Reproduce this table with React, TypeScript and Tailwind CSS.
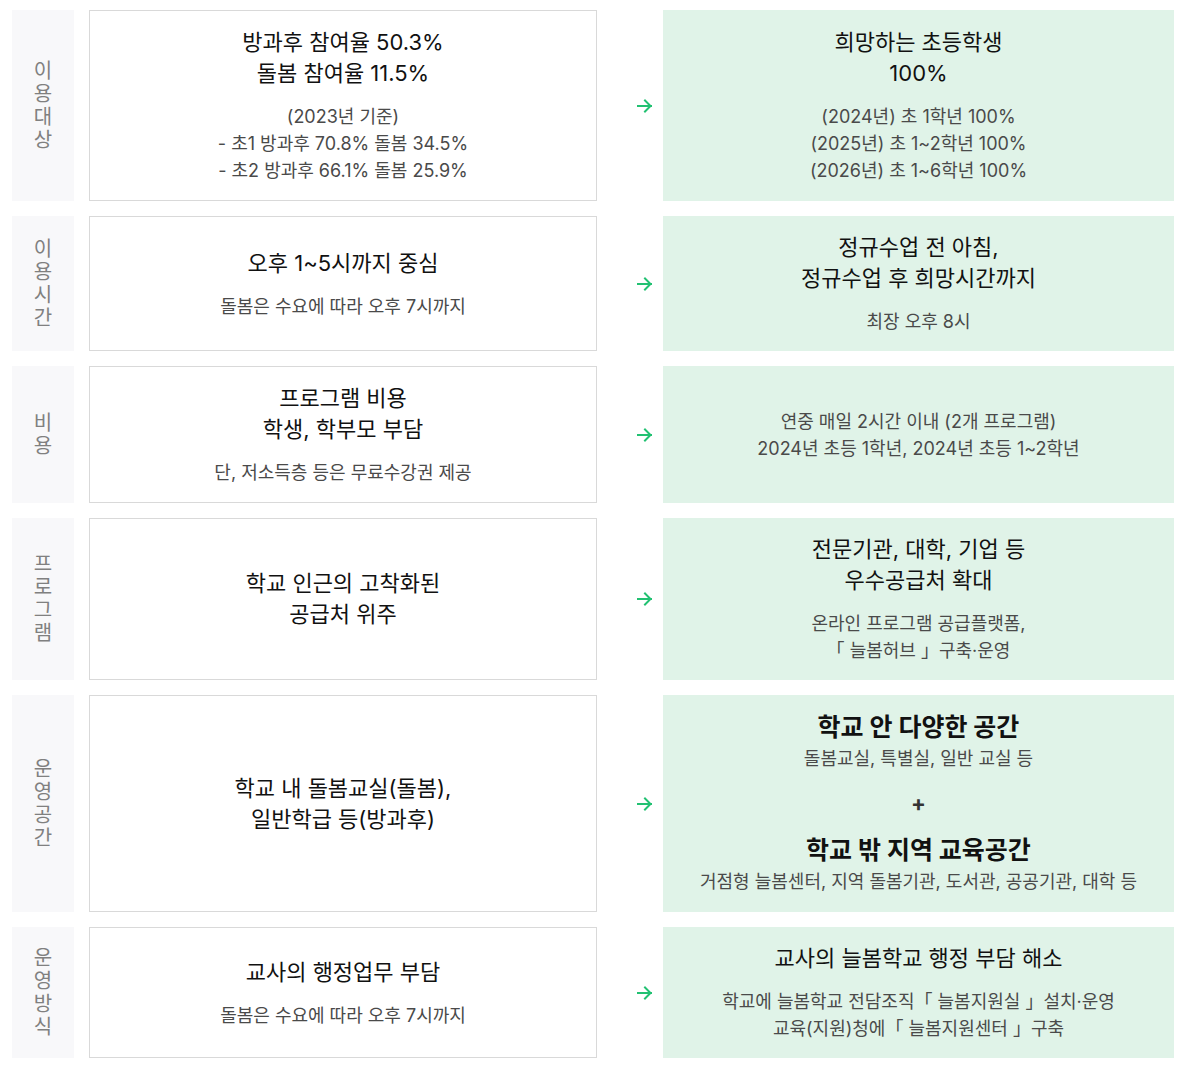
import React from "react";

type Row = {
  label: string;
  h: string;
  left: React.ReactNode;
  right: React.ReactNode;
};

const Title = ({ children, className = "" }: { children: React.ReactNode; className?: string }) => (
  <div className={`text-[22px] leading-[31px] font-normal text-[#111] ${className}`}>{children}</div>
);
const Sub = ({ children, className = "" }: { children: React.ReactNode; className?: string }) => (
  <div className={`text-[18px] leading-[27px] text-[#4a4a4a] ${className}`}>{children}</div>
);

const rows: Row[] = [
  {
    label: "이용대상",
    h: "h-[191px]",
    left: (
      <>
        <Title>
          방과후 참여율 50.3%
          <br />
          돌봄 참여율 11.5%
        </Title>
        <Sub className="mt-[14px]">
          (2023년 기준)
          <br />- 초1 방과후 70.8% 돌봄 34.5%
          <br />- 초2 방과후 66.1% 돌봄 25.9%
        </Sub>
      </>
    ),
    right: (
      <>
        <Title>
          희망하는 초등학생
          <br />
          100%
        </Title>
        <Sub className="mt-[14px]">
          (2024년) 초 1학년 100%
          <br />
          (2025년) 초 1~2학년 100%
          <br />
          (2026년) 초 1~6학년 100%
        </Sub>
      </>
    ),
  },
  {
    label: "이용시간",
    h: "h-[135px]",
    left: (
      <>
        <Title>오후 1~5시까지 중심</Title>
        <Sub className="mt-[14px]">돌봄은 수요에 따라 오후 7시까지</Sub>
      </>
    ),
    right: (
      <>
        <Title>
          정규수업 전 아침,
          <br />
          정규수업 후 희망시간까지
        </Title>
        <Sub className="mt-[14px]">최장 오후 8시</Sub>
      </>
    ),
  },
  {
    label: "비용",
    h: "h-[137px]",
    left: (
      <>
        <Title>
          프로그램 비용
          <br />
          학생, 학부모 부담
        </Title>
        <Sub className="mt-[14px]">단, 저소득층 등은 무료수강권 제공</Sub>
      </>
    ),
    right: (
      <Sub>
        연중 매일 2시간 이내 (2개 프로그램)
        <br />
        2024년 초등 1학년, 2024년 초등 1~2학년
      </Sub>
    ),
  },
  {
    label: "프로그램",
    h: "h-[162px]",
    left: (
      <Title>
        학교 인근의 고착화된
        <br />
        공급처 위주
      </Title>
    ),
    right: (
      <>
        <Title>
          전문기관, 대학, 기업 등
          <br />
          우수공급처 확대
        </Title>
        <Sub className="mt-[14px]">
          온라인 프로그램 공급플랫폼,
          <br />「 늘봄허브 」구축·운영
        </Sub>
      </>
    ),
  },
  {
    label: "운영공간",
    h: "h-[217px]",
    left: (
      <Title>
        학교 내 돌봄교실(돌봄),
        <br />
        일반학급 등(방과후)
      </Title>
    ),
    right: (
      <>
        <div className="text-[25px] leading-[31px] font-bold text-[#111]">학교 안 다양한 공간</div>
        <Sub className="mt-[2px]">돌봄교실, 특별실, 일반 교실 등</Sub>
        <div className="my-[18px] text-[22px] leading-[27px] font-bold text-[#333]">+</div>
        <div className="text-[25px] leading-[31px] font-bold text-[#111]">학교 밖 지역 교육공간</div>
        <Sub className="mt-[2px]">거점형 늘봄센터, 지역 돌봄기관, 도서관, 공공기관, 대학 등</Sub>
      </>
    ),
  },
  {
    label: "운영방식",
    h: "h-[131px]",
    left: (
      <>
        <Title>교사의 행정업무 부담</Title>
        <Sub className="mt-[14px]">돌봄은 수요에 따라 오후 7시까지</Sub>
      </>
    ),
    right: (
      <>
        <Title>교사의 늘봄학교 행정 부담 해소</Title>
        <Sub className="mt-[14px]">
          학교에 늘봄학교 전담조직「 늘봄지원실 」설치·운영
          <br />
          교육(지원)청에「 늘봄지원센터 」구축
        </Sub>
      </>
    ),
  },
];

function Arrow() {
  return (
    <svg width="16" height="14" viewBox="0 0 16 14" fill="none" stroke="#22c172" strokeWidth="2" strokeLinecap="square">
      <path d="M1 7h13M8 1.5L13.5 7 8 12.5" />
    </svg>
  );
}

export default function App() {
  return (
    <div
      className="w-[1186px] bg-white pt-[10px] pl-[12px] pr-[12px] pb-[15px] flex flex-col gap-[15px]"
      style={{ fontFamily: 'Inter, "Noto Sans CJK KR", sans-serif' }}
    >
      {rows.map((r) => (
        <div key={r.label} className={`flex items-stretch ${r.h}`}>
          <div className="w-[62px] shrink-0 bg-[#f8f8fa] flex flex-col items-center justify-center">
            {r.label.split("").map((c, i) => (
              <span key={i} className="block text-[20px] leading-[23px] text-[#808080]">
                {c}
              </span>
            ))}
          </div>
          <div className="ml-[15px] w-[508px] shrink-0 border border-[#d9d9d9] flex flex-col items-center justify-center text-center">
            {r.left}
          </div>
          <div className="w-[66px] shrink-0 flex items-center justify-end pr-[10px]">
            <Arrow />
          </div>
          <div className="w-[511px] shrink-0 bg-[#e0f3e8] flex flex-col items-center justify-center text-center">
            {r.right}
          </div>
        </div>
      ))}
    </div>
  );
}
